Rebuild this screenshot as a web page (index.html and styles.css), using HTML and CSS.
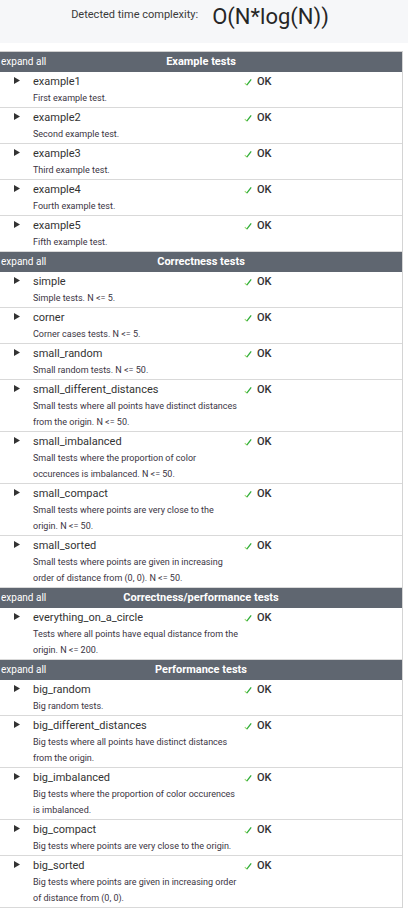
FILE: index.html
```html
<!DOCTYPE html>
<html>
<head>
<meta charset="utf-8">
<link rel="stylesheet" href="styles.css">
</head>
<body>
<div class="complexity">
  <span class="label">Detected time complexity:</span>
  <span class="value">O(N*log(N))</span>
</div>

<div class="tests">
  <div class="group-head"><span class="expand">expand all</span><span class="group-title">Example tests</span><span></span></div>
  <div class="row"><div class="arrow"><svg width="6" height="7" viewBox="0 0 6 7"><polygon points="0,0 6,3.5 0,7" fill="#333"/></svg></div><div class="info"><div class="name">example1</div><div class="desc">First example test.</div></div><div class="status"><svg width="8" height="7" viewBox="0 0 8 7"><path d="M0.8 4 L2.8 6.2" stroke="#9fd86a" stroke-width="1.1" fill="none"/><path d="M2.8 6.2 L7.2 0.4" stroke="#2fae3a" stroke-width="1.3" fill="none"/></svg><span class="ok">OK</span></div></div>
  <div class="row"><div class="arrow"><svg width="6" height="7" viewBox="0 0 6 7"><polygon points="0,0 6,3.5 0,7" fill="#333"/></svg></div><div class="info"><div class="name">example2</div><div class="desc">Second example test.</div></div><div class="status"><svg width="8" height="7" viewBox="0 0 8 7"><path d="M0.8 4 L2.8 6.2" stroke="#9fd86a" stroke-width="1.1" fill="none"/><path d="M2.8 6.2 L7.2 0.4" stroke="#2fae3a" stroke-width="1.3" fill="none"/></svg><span class="ok">OK</span></div></div>
  <div class="row"><div class="arrow"><svg width="6" height="7" viewBox="0 0 6 7"><polygon points="0,0 6,3.5 0,7" fill="#333"/></svg></div><div class="info"><div class="name">example3</div><div class="desc">Third example test.</div></div><div class="status"><svg width="8" height="7" viewBox="0 0 8 7"><path d="M0.8 4 L2.8 6.2" stroke="#9fd86a" stroke-width="1.1" fill="none"/><path d="M2.8 6.2 L7.2 0.4" stroke="#2fae3a" stroke-width="1.3" fill="none"/></svg><span class="ok">OK</span></div></div>
  <div class="row"><div class="arrow"><svg width="6" height="7" viewBox="0 0 6 7"><polygon points="0,0 6,3.5 0,7" fill="#333"/></svg></div><div class="info"><div class="name">example4</div><div class="desc">Fourth example test.</div></div><div class="status"><svg width="8" height="7" viewBox="0 0 8 7"><path d="M0.8 4 L2.8 6.2" stroke="#9fd86a" stroke-width="1.1" fill="none"/><path d="M2.8 6.2 L7.2 0.4" stroke="#2fae3a" stroke-width="1.3" fill="none"/></svg><span class="ok">OK</span></div></div>
  <div class="row"><div class="arrow"><svg width="6" height="7" viewBox="0 0 6 7"><polygon points="0,0 6,3.5 0,7" fill="#333"/></svg></div><div class="info"><div class="name">example5</div><div class="desc">Fifth example test.</div></div><div class="status"><svg width="8" height="7" viewBox="0 0 8 7"><path d="M0.8 4 L2.8 6.2" stroke="#9fd86a" stroke-width="1.1" fill="none"/><path d="M2.8 6.2 L7.2 0.4" stroke="#2fae3a" stroke-width="1.3" fill="none"/></svg><span class="ok">OK</span></div></div>

  <div class="group-head"><span class="expand">expand all</span><span class="group-title">Correctness tests</span><span></span></div>
  <div class="row"><div class="arrow"><svg width="6" height="7" viewBox="0 0 6 7"><polygon points="0,0 6,3.5 0,7" fill="#333"/></svg></div><div class="info"><div class="name">simple</div><div class="desc">Simple tests. N &lt;= 5.</div></div><div class="status"><svg width="8" height="7" viewBox="0 0 8 7"><path d="M0.8 4 L2.8 6.2" stroke="#9fd86a" stroke-width="1.1" fill="none"/><path d="M2.8 6.2 L7.2 0.4" stroke="#2fae3a" stroke-width="1.3" fill="none"/></svg><span class="ok">OK</span></div></div>
  <div class="row"><div class="arrow"><svg width="6" height="7" viewBox="0 0 6 7"><polygon points="0,0 6,3.5 0,7" fill="#333"/></svg></div><div class="info"><div class="name">corner</div><div class="desc">Corner cases tests. N &lt;= 5.</div></div><div class="status"><svg width="8" height="7" viewBox="0 0 8 7"><path d="M0.8 4 L2.8 6.2" stroke="#9fd86a" stroke-width="1.1" fill="none"/><path d="M2.8 6.2 L7.2 0.4" stroke="#2fae3a" stroke-width="1.3" fill="none"/></svg><span class="ok">OK</span></div></div>
  <div class="row"><div class="arrow"><svg width="6" height="7" viewBox="0 0 6 7"><polygon points="0,0 6,3.5 0,7" fill="#333"/></svg></div><div class="info"><div class="name">small_random</div><div class="desc">Small random tests. N &lt;= 50.</div></div><div class="status"><svg width="8" height="7" viewBox="0 0 8 7"><path d="M0.8 4 L2.8 6.2" stroke="#9fd86a" stroke-width="1.1" fill="none"/><path d="M2.8 6.2 L7.2 0.4" stroke="#2fae3a" stroke-width="1.3" fill="none"/></svg><span class="ok">OK</span></div></div>
  <div class="row"><div class="arrow"><svg width="6" height="7" viewBox="0 0 6 7"><polygon points="0,0 6,3.5 0,7" fill="#333"/></svg></div><div class="info"><div class="name">small_different_distances</div><div class="desc">Small tests where all points have distinct distances from the origin. N &lt;= 50.</div></div><div class="status"><svg width="8" height="7" viewBox="0 0 8 7"><path d="M0.8 4 L2.8 6.2" stroke="#9fd86a" stroke-width="1.1" fill="none"/><path d="M2.8 6.2 L7.2 0.4" stroke="#2fae3a" stroke-width="1.3" fill="none"/></svg><span class="ok">OK</span></div></div>
  <div class="row"><div class="arrow"><svg width="6" height="7" viewBox="0 0 6 7"><polygon points="0,0 6,3.5 0,7" fill="#333"/></svg></div><div class="info"><div class="name">small_imbalanced</div><div class="desc">Small tests where the proportion of color occurences is imbalanced. N &lt;= 50.</div></div><div class="status"><svg width="8" height="7" viewBox="0 0 8 7"><path d="M0.8 4 L2.8 6.2" stroke="#9fd86a" stroke-width="1.1" fill="none"/><path d="M2.8 6.2 L7.2 0.4" stroke="#2fae3a" stroke-width="1.3" fill="none"/></svg><span class="ok">OK</span></div></div>
  <div class="row"><div class="arrow"><svg width="6" height="7" viewBox="0 0 6 7"><polygon points="0,0 6,3.5 0,7" fill="#333"/></svg></div><div class="info"><div class="name">small_compact</div><div class="desc">Small tests where points are very close to the origin. N &lt;= 50.</div></div><div class="status"><svg width="8" height="7" viewBox="0 0 8 7"><path d="M0.8 4 L2.8 6.2" stroke="#9fd86a" stroke-width="1.1" fill="none"/><path d="M2.8 6.2 L7.2 0.4" stroke="#2fae3a" stroke-width="1.3" fill="none"/></svg><span class="ok">OK</span></div></div>
  <div class="row"><div class="arrow"><svg width="6" height="7" viewBox="0 0 6 7"><polygon points="0,0 6,3.5 0,7" fill="#333"/></svg></div><div class="info"><div class="name">small_sorted</div><div class="desc">Small tests where points are given in increasing order of distance from (0, 0). N &lt;= 50.</div></div><div class="status"><svg width="8" height="7" viewBox="0 0 8 7"><path d="M0.8 4 L2.8 6.2" stroke="#9fd86a" stroke-width="1.1" fill="none"/><path d="M2.8 6.2 L7.2 0.4" stroke="#2fae3a" stroke-width="1.3" fill="none"/></svg><span class="ok">OK</span></div></div>

  <div class="group-head"><span class="expand">expand all</span><span class="group-title">Correctness/performance tests</span><span></span></div>
  <div class="row"><div class="arrow"><svg width="6" height="7" viewBox="0 0 6 7"><polygon points="0,0 6,3.5 0,7" fill="#333"/></svg></div><div class="info"><div class="name">everything_on_a_circle</div><div class="desc">Tests where all points have equal distance from the origin. N &lt;= 200.</div></div><div class="status"><svg width="8" height="7" viewBox="0 0 8 7"><path d="M0.8 4 L2.8 6.2" stroke="#9fd86a" stroke-width="1.1" fill="none"/><path d="M2.8 6.2 L7.2 0.4" stroke="#2fae3a" stroke-width="1.3" fill="none"/></svg><span class="ok">OK</span></div></div>

  <div class="group-head"><span class="expand">expand all</span><span class="group-title">Performance tests</span><span></span></div>
  <div class="row"><div class="arrow"><svg width="6" height="7" viewBox="0 0 6 7"><polygon points="0,0 6,3.5 0,7" fill="#333"/></svg></div><div class="info"><div class="name">big_random</div><div class="desc">Big random tests.</div></div><div class="status"><svg width="8" height="7" viewBox="0 0 8 7"><path d="M0.8 4 L2.8 6.2" stroke="#9fd86a" stroke-width="1.1" fill="none"/><path d="M2.8 6.2 L7.2 0.4" stroke="#2fae3a" stroke-width="1.3" fill="none"/></svg><span class="ok">OK</span></div></div>
  <div class="row"><div class="arrow"><svg width="6" height="7" viewBox="0 0 6 7"><polygon points="0,0 6,3.5 0,7" fill="#333"/></svg></div><div class="info"><div class="name">big_different_distances</div><div class="desc">Big tests where all points have distinct distances from the origin.</div></div><div class="status"><svg width="8" height="7" viewBox="0 0 8 7"><path d="M0.8 4 L2.8 6.2" stroke="#9fd86a" stroke-width="1.1" fill="none"/><path d="M2.8 6.2 L7.2 0.4" stroke="#2fae3a" stroke-width="1.3" fill="none"/></svg><span class="ok">OK</span></div></div>
  <div class="row"><div class="arrow"><svg width="6" height="7" viewBox="0 0 6 7"><polygon points="0,0 6,3.5 0,7" fill="#333"/></svg></div><div class="info"><div class="name">big_imbalanced</div><div class="desc">Big tests where the proportion of color occurences is imbalanced.</div></div><div class="status"><svg width="8" height="7" viewBox="0 0 8 7"><path d="M0.8 4 L2.8 6.2" stroke="#9fd86a" stroke-width="1.1" fill="none"/><path d="M2.8 6.2 L7.2 0.4" stroke="#2fae3a" stroke-width="1.3" fill="none"/></svg><span class="ok">OK</span></div></div>
  <div class="row"><div class="arrow"><svg width="6" height="7" viewBox="0 0 6 7"><polygon points="0,0 6,3.5 0,7" fill="#333"/></svg></div><div class="info"><div class="name">big_compact</div><div class="desc">Big tests where points are very close to the origin.</div></div><div class="status"><svg width="8" height="7" viewBox="0 0 8 7"><path d="M0.8 4 L2.8 6.2" stroke="#9fd86a" stroke-width="1.1" fill="none"/><path d="M2.8 6.2 L7.2 0.4" stroke="#2fae3a" stroke-width="1.3" fill="none"/></svg><span class="ok">OK</span></div></div>
  <div class="row"><div class="arrow"><svg width="6" height="7" viewBox="0 0 6 7"><polygon points="0,0 6,3.5 0,7" fill="#333"/></svg></div><div class="info"><div class="name">big_sorted</div><div class="desc">Big tests where points are given in increasing order of distance from (0, 0).</div></div><div class="status"><svg width="8" height="7" viewBox="0 0 8 7"><path d="M0.8 4 L2.8 6.2" stroke="#9fd86a" stroke-width="1.1" fill="none"/><path d="M2.8 6.2 L7.2 0.4" stroke="#2fae3a" stroke-width="1.3" fill="none"/></svg><span class="ok">OK</span></div></div>
</div>
</body>
</html>
```
FILE: styles.css
```css
html, body {
  margin: 0;
  padding: 0;
  background: #fff;
  font-family: Roboto, "Liberation Sans", sans-serif;
  color: #333;
}

.complexity {
  background: #f6f7f9;
  height: 43px;
  box-sizing: border-box;
  padding: 4px 8px 0 0;
  display: flex;
  justify-content: center;
  align-items: flex-start;
  gap: 14px;
}

.complexity .label {
  font-size: 11px;
  line-height: 13px;
  margin-top: 4px;
  color: #3a3a3a;
}

.complexity .value {
  font-size: 22px;
  line-height: 26px;
  color: #262626;
}

.tests {
  margin-top: 8px;
  width: 403px;
  box-sizing: border-box;
  border-top: 1px solid #cfcfcf;
  border-right: 1px solid #d4d4d4;
}

.group-head {
  background: #5f6670;
  color: #fff;
  height: 20px;
  line-height: 20px;
  display: grid;
  grid-template-columns: 1fr auto 1fr;
  align-items: center;
}

.expand {
  font-size: 10px;
  padding-left: 1px;
}

.group-title {
  font-size: 11px;
  font-weight: 700;
}

.row {
  display: grid;
  grid-template-columns: 33px 210px 1fr;
  padding: 2px 0 1px;
  border-bottom: 1px solid #d9d9d9;
}

.info {
  padding-right: 4px;
}

.arrow {
  padding: 3px 0 0 14px;
  height: 16px;
  box-sizing: border-box;
}

.arrow svg {
  display: block;
}

.name {
  font-size: 11px;
  line-height: 16px;
  color: #333;
}

.desc {
  font-size: 9px;
  line-height: 16px;
  color: #3a3442;
}

.status {
  display: flex;
  align-items: center;
  height: 16px;
  padding-left: 1px;
  gap: 5px;
}

.status svg {
  display: block;
}

.ok {
  font-size: 11px;
  font-weight: 500;
  line-height: 16px;
  color: #333;
}
```
